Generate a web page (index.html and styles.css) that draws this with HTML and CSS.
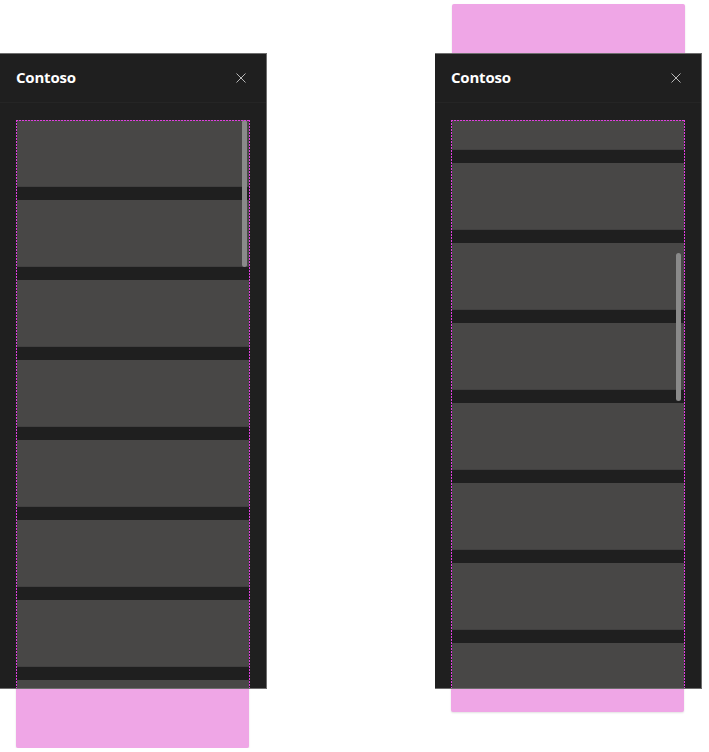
FILE: index.html
```html
<!DOCTYPE html>
<html>
<head>
<meta charset="utf-8">
<link rel="stylesheet" href="styles.css">
</head>
<body>
<div class="stage">
  <div class="column column-left">
    <section class="panel">
      <header class="panel-header">
        <h1 class="panel-title">Contoso</h1>
        <button class="close-btn" aria-label="Close">
          <svg width="10" height="10" viewBox="0 0 10 10"><path d="M0.5 0.5 L9.5 9.5 M9.5 0.5 L0.5 9.5" stroke="#b8b8b8" stroke-width="1" fill="none"/></svg>
        </button>
      </header>
      <div class="panel-body">
        <div class="viewport">
          <div class="list">
            <div class="item"></div><div class="item"></div><div class="item"></div><div class="item"></div>
            <div class="item"></div><div class="item"></div><div class="item"></div><div class="item"></div>
          </div>
          <div class="thumb thumb-left"></div>
        </div>
      </div>
    </section>
    <div class="overflow overflow-left-bottom"></div>
  </div>
  <div class="column column-right">
    <div class="overflow overflow-right-top"></div>
    <section class="panel panel-right">
      <header class="panel-header">
        <h1 class="panel-title">Contoso</h1>
        <button class="close-btn" aria-label="Close">
          <svg width="10" height="10" viewBox="0 0 10 10"><path d="M0.5 0.5 L9.5 9.5 M9.5 0.5 L0.5 9.5" stroke="#b8b8b8" stroke-width="1" fill="none"/></svg>
        </button>
      </header>
      <div class="panel-body">
        <div class="viewport">
          <div class="list list-scrolled">
            <div class="item"></div><div class="item"></div><div class="item"></div><div class="item"></div>
            <div class="item"></div><div class="item"></div><div class="item"></div><div class="item"></div>
          </div>
          <div class="thumb thumb-right"></div>
        </div>
      </div>
    </section>
    <div class="overflow overflow-right-bottom"></div>
  </div>
</div>
</body>
</html>
```

FILE: styles.css
```css
html, body {
  margin: 0;
  padding: 0;
  background: #ffffff;
  font-family: "Open Sans", "Noto Sans", sans-serif;
}

.stage {
  display: flex;
  align-items: flex-start;
}

.column {
  display: flex;
  flex-direction: column;
  width: 267px;
}

.column-left {
  padding-top: 53px;
}

.column-right {
  margin-left: 168px;
  padding-top: 4px;
}

.panel {
  position: relative;
  z-index: 1;
  box-sizing: border-box;
  width: 267px;
  height: 636px;
  flex: none;
  background: #1f1f1f;
  border-top: 1px solid #6e6e6e;
  border-right: 1px solid #6e6e6e;
  border-bottom: 1px solid #6e6e6e;
  display: flex;
  flex-direction: column;
  overflow: hidden;
}

.panel-right {
  margin-top: -11px;
}

.panel-header {
  box-sizing: border-box;
  height: 49px;
  flex: none;
  display: flex;
  align-items: center;
  justify-content: space-between;
  padding: 0 20px 0 16px;
  border-bottom: 1px solid #252525;
}

.panel-title {
  margin: 0 0 2px 0;
  color: #ffffff;
  font-size: 15px;
  font-weight: 700;
  letter-spacing: -0.2px;
  line-height: 20px;
}

.close-btn {
  background: none;
  border: 0;
  padding: 0;
  width: 10px;
  height: 10px;
  display: flex;
}

.panel-body {
  flex: 1;
  min-height: 0;
  display: flex;
  flex-direction: column;
  padding: 17px 16px 0 16px;
}

.viewport {
  position: relative;
  flex: 1;
  width: 234px;
  box-sizing: border-box;
  padding: 0 1px;
  overflow: hidden;
}

.viewport::after {
  content: "";
  position: absolute;
  inset: 0;
  pointer-events: none;
  background:
    repeating-linear-gradient(to right, #e03ee0 0 2px, transparent 2px 3px) top left / 100% 1px no-repeat,
    repeating-linear-gradient(to bottom, #e03ee0 0 2px, transparent 2px 3px) top left / 1px 100% no-repeat,
    repeating-linear-gradient(to bottom, #e03ee0 0 2px, transparent 2px 3px) top right / 1px 100% no-repeat;
}

.list {
  display: flex;
  flex-direction: column;
  gap: 13px;
}

.list-scrolled {
  margin-top: -37px;
}

.item {
  flex: none;
  height: 67px;
  background: #484746;
  box-shadow: inset 0 -1px 0 #414040;
}

.thumb {
  position: absolute;
  width: 5px;
  border-radius: 3px;
  background: #8a8a8a;
}

.thumb-left {
  top: 0;
  right: 3px;
  height: 147px;
}

.thumb-right {
  top: 133px;
  right: 4px;
  height: 148px;
}

.overflow {
  flex: none;
  width: 233px;
  background: #efa6e6;
  border-radius: 2px;
  box-shadow: 0 1px 2px rgba(0, 0, 0, 0.12);
}

.overflow-left-bottom {
  margin-left: 16px;
  margin-top: -9px;
  height: 68px;
}

.overflow-right-top {
  margin-left: 17px;
  height: 60px;
}

.overflow-right-bottom {
  margin-left: 16px;
  margin-top: -9px;
  height: 32px;
}
```
